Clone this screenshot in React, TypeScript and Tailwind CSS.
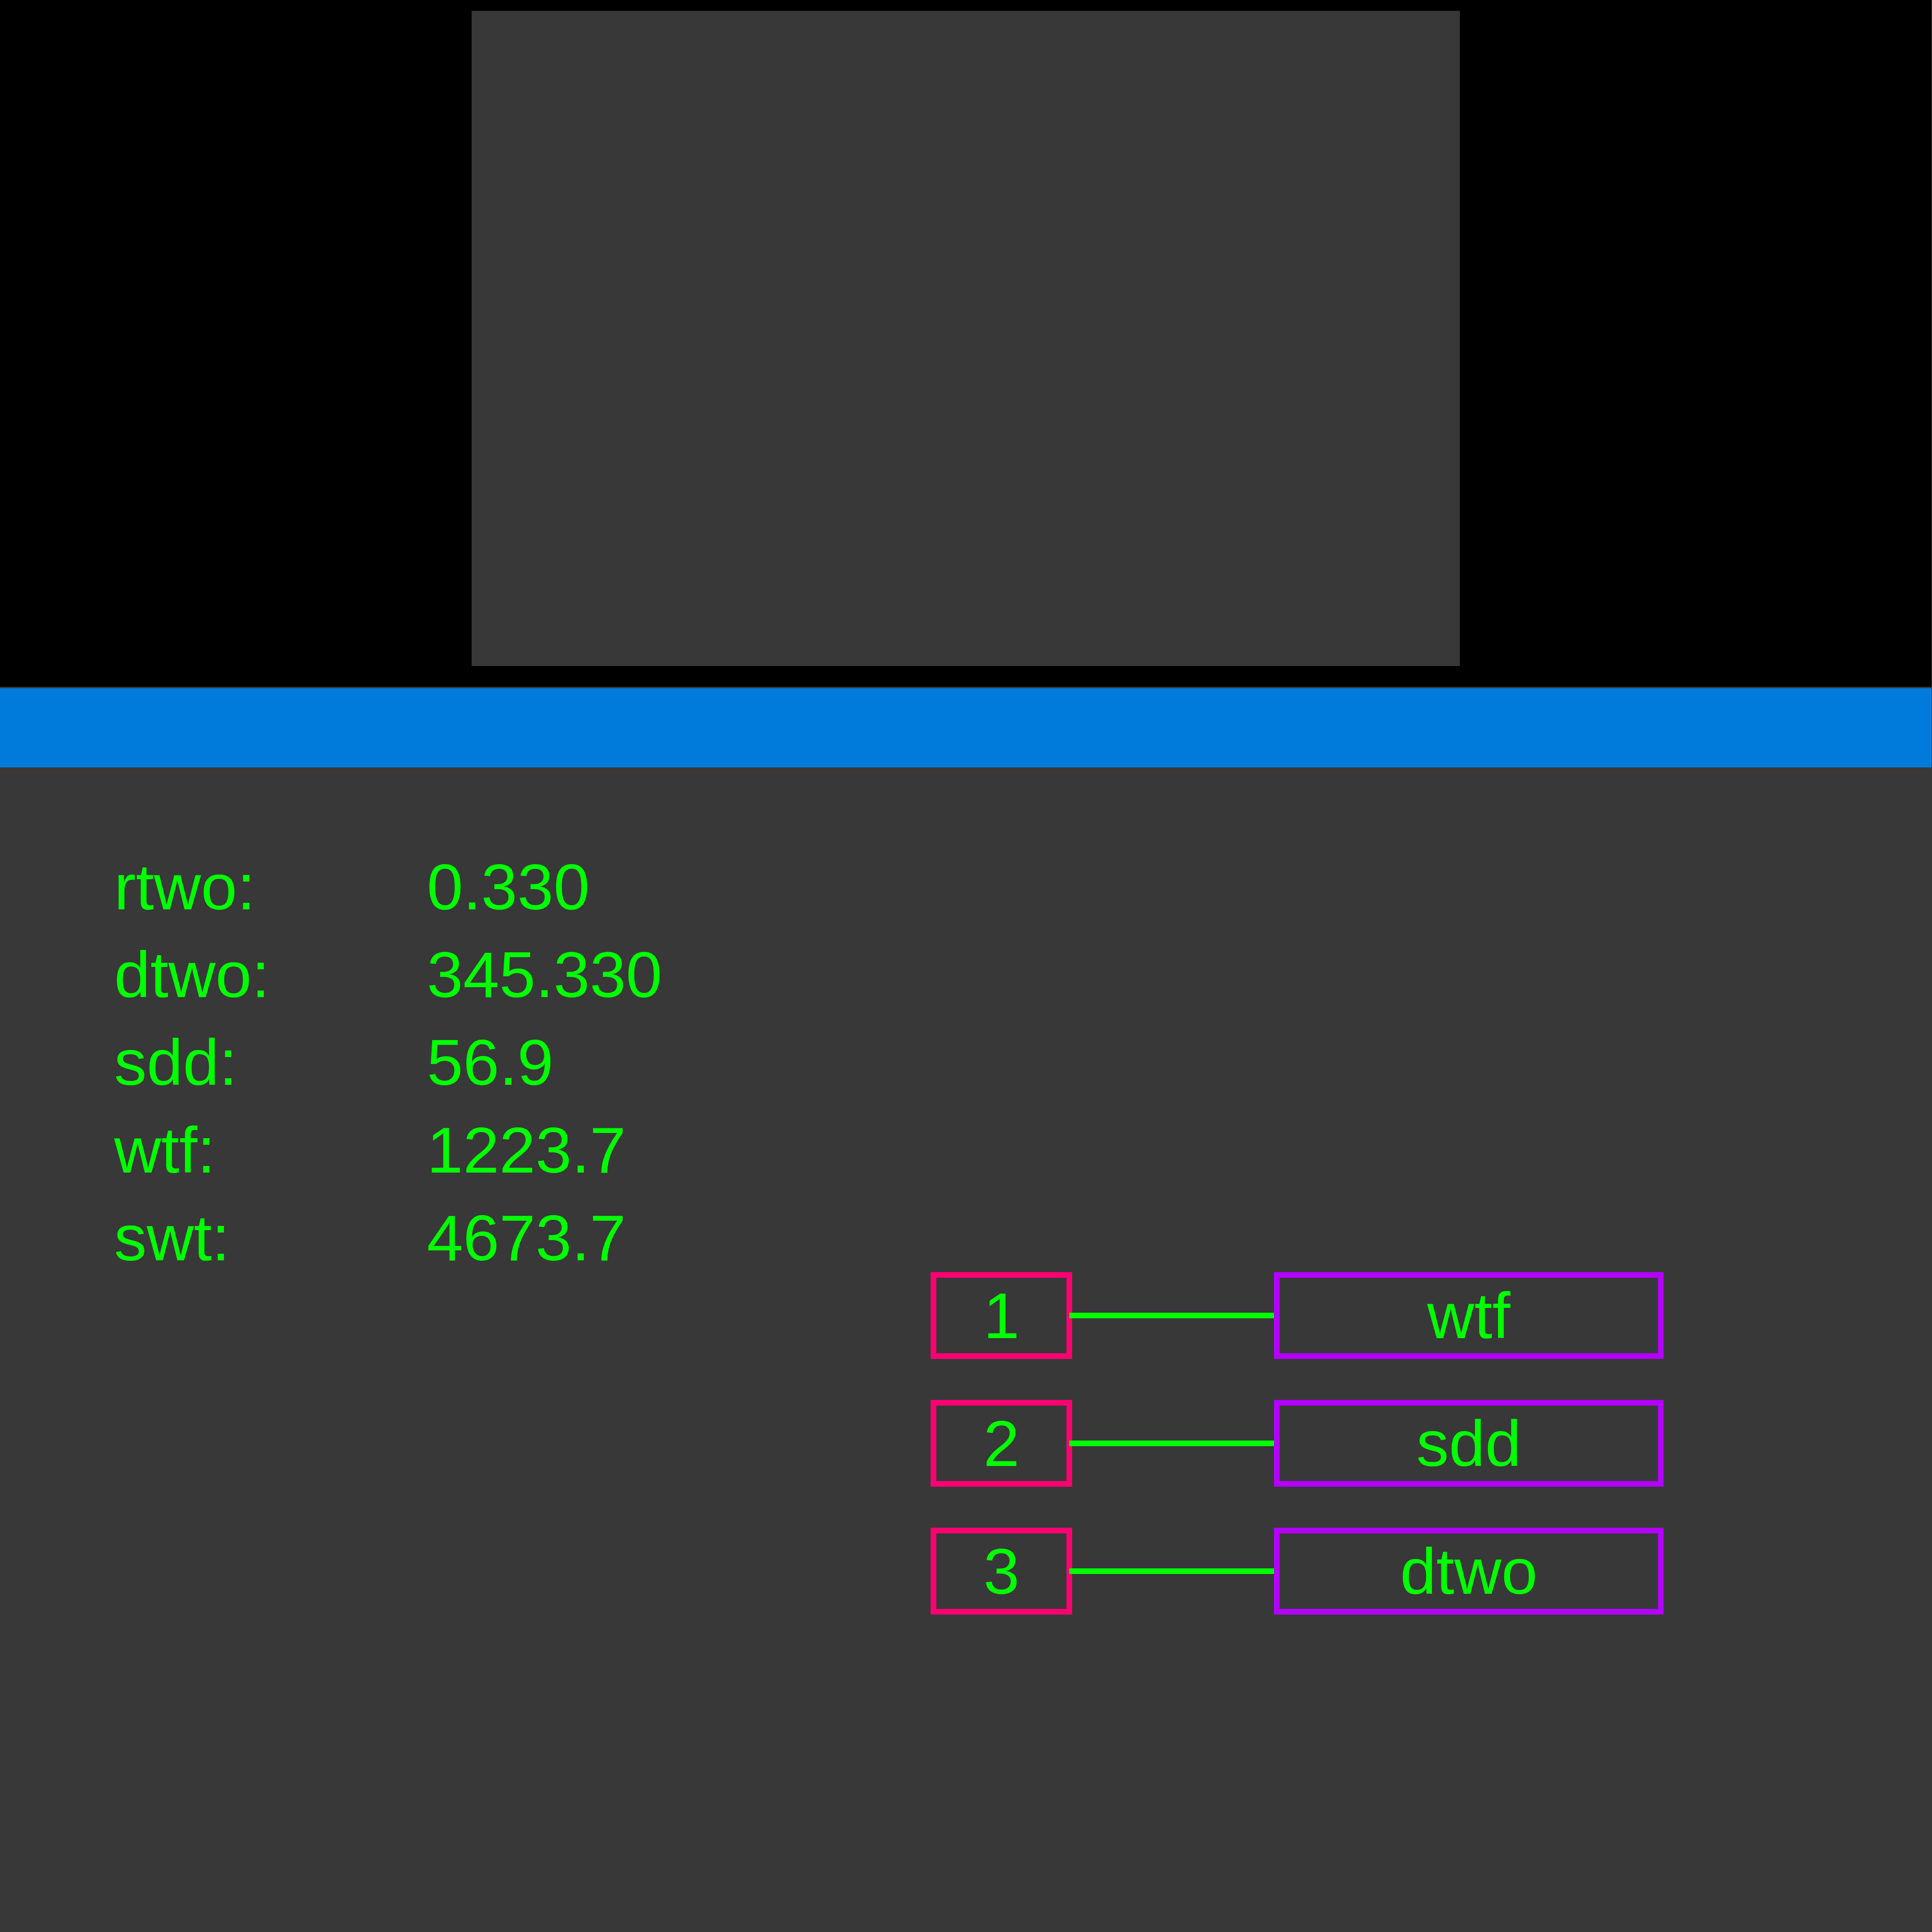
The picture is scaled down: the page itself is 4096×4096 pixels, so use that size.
const readings = [
  { label: "rtwo:", value: "0.330" },
  { label: "dtwo:", value: "345.330" },
  { label: "sdd:", value: "56.9" },
  { label: "wtf:", value: "1223.7" },
  { label: "swt:", value: "4673.7" },
];

const links = [
  { id: "1", name: "wtf" },
  { id: "2", name: "sdd" },
  { id: "3", name: "dtwo" },
];

function Preview() {
  return (
    <header className="mr-px grid grid-cols-[1000fr_2096fr_1000fr] bg-black pt-[23px] pb-[44px]">
      <div className="col-start-2 h-[1389px] bg-[#383838]" />
    </header>
  );
}

function Readings() {
  return (
    <dl className="grid grid-cols-[663px_1fr] pt-[160px] pl-[242px] leading-[186px]">
      {readings.map((r) => (
        <div key={r.label} className="col-span-2 grid grid-cols-subgrid">
          <dt>{r.label}</dt>
          <dd>{r.value}</dd>
        </div>
      ))}
    </dl>
  );
}

function Links() {
  return (
    <ul className="mt-[1070px] flex flex-col gap-[87px]">
      {links.map((l) => (
        <li
          key={l.id}
          className="grid h-[184px] grid-cols-[300fr_428fr_826fr] items-center text-center leading-[160px]"
        >
          <span className="border-[12px] border-[#ff0073]">{l.id}</span>
          <span className="relative -ml-[6px] h-[12px] bg-[#00ff00]" />
          <span className="border-[12px] border-[#b300ff]">{l.name}</span>
        </li>
      ))}
    </ul>
  );
}

export default function App() {
  return (
    <div className="min-h-screen bg-[#383838] font-['Liberation_Sans',Arial,sans-serif] text-[138px] text-[#00ff00]">
      <Preview />
      <div className="mt-[3px] mr-px h-[168px] bg-[#007bdb]" />
      <main className="grid grid-cols-[1973fr_1554fr_569fr] items-start">
        <Readings />
        <Links />
      </main>
    </div>
  );
}
